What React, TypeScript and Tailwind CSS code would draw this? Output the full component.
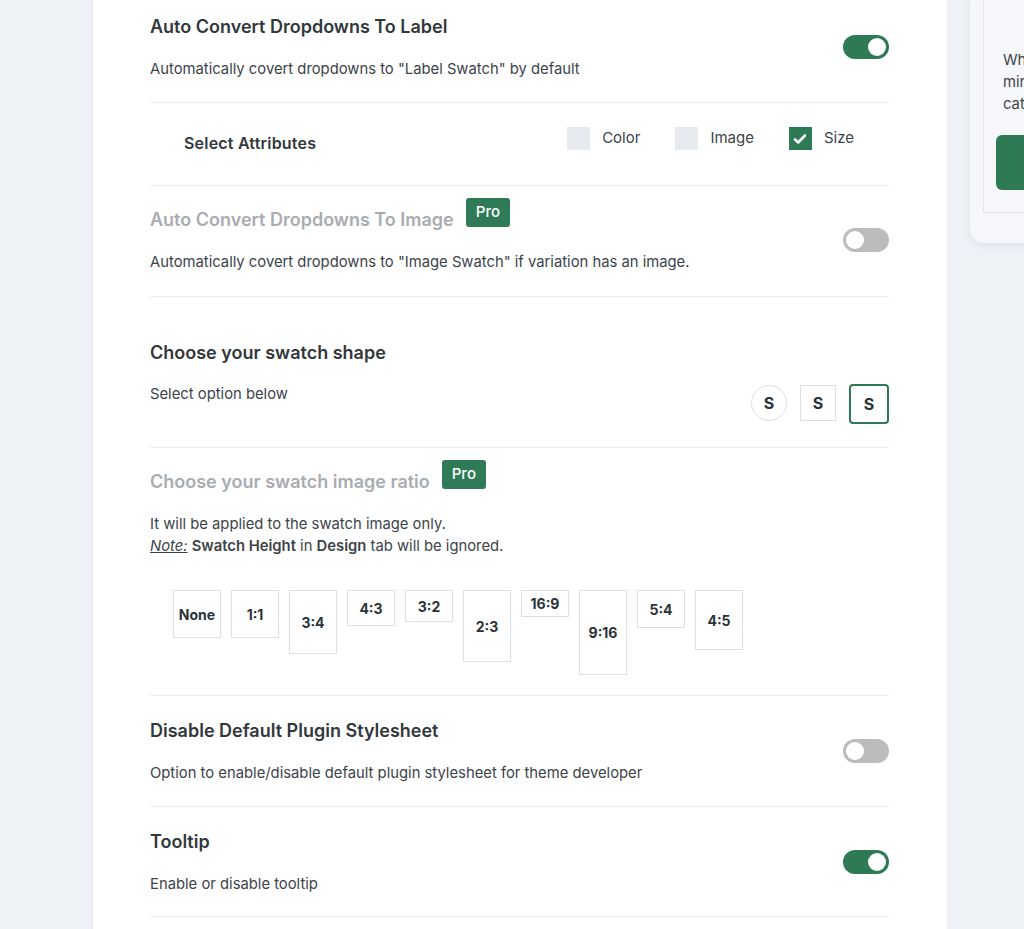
import type { ReactNode } from "react";

const green = "bg-[#2d7a55]";

function Toggle({ on }: { on: boolean }) {
  return (
    <span
      className={[
        "flex h-6 w-[46px] shrink-0 items-center rounded-full px-[3px]",
        on ? `${green} justify-end` : "bg-[#bcbcbc] justify-start"
      ].join(" ")}
    >
      <span className="h-[18px] w-[18px] rounded-full bg-white" />
    </span>
  );
}

function ProBadge() {
  return (
    <span className="ml-[12px] mb-[5px] flex h-[29px] items-center rounded-[3px] bg-[#2f7b57] px-[10px] text-[15px] font-medium text-white">
      Pro
    </span>
  );
}

function ToggleRow({
  title,
  desc,
  on,
  pro,
  className
}: {
  title: string;
  desc: string;
  on: boolean;
  pro?: boolean;
  className: string;
}) {
  return (
    <section className={`flex items-center justify-between border-b border-[#eceef1] ${className}`}>
      <div className="flex flex-col">
        <div className="flex items-end">
          <h2
            className={`h-6 text-[18px] font-semibold leading-6 ${pro ? "text-[#a9acb0]" : "text-[#32373c]"}`}
          >
            {title}
          </h2>
          {pro && <ProBadge />}
        </div>
        <p className="mt-[20px] text-[14.8px] leading-5 text-[#3c434a]">{desc}</p>
      </div>
      <div className={pro ? "mt-[10px]" : ""}>
        <Toggle on={on} />
      </div>
    </section>
  );
}

function Checkbox({ label, checked }: { label: string; checked?: boolean }) {
  return (
    <label className="flex items-center gap-3">
      <span
        className={`flex h-[23px] w-[23px] items-center justify-center ${checked ? green : "bg-[#e7eaef]"}`}
      >
        {checked && (
          <svg width="16" height="16" viewBox="0 0 16 16" fill="none">
            <path d="M3 8.5l3.2 3L13 4.5" stroke="white" strokeWidth="2.6" strokeLinecap="round" strokeLinejoin="round" />
          </svg>
        )}
      </span>
      <span className="text-[15px] text-[#3c434a]">{label}</span>
    </label>
  );
}

const ratios: { label: string; aspect: string }[] = [
  { label: "None", aspect: "aspect-square" },
  { label: "1:1", aspect: "aspect-square" },
  { label: "3:4", aspect: "aspect-[3/4]" },
  { label: "4:3", aspect: "aspect-[4/3]" },
  { label: "3:2", aspect: "aspect-[3/2]" },
  { label: "2:3", aspect: "aspect-[2/3]" },
  { label: "16:9", aspect: "aspect-[16/9]" },
  { label: "9:16", aspect: "aspect-[9/16]" },
  { label: "5:4", aspect: "aspect-[5/4]" },
  { label: "4:5", aspect: "aspect-[4/5]" }
];

function ShapeOption({ children, className }: { children: ReactNode; className: string }) {
  return (
    <span className={`flex items-center justify-center text-[16px] font-bold text-[#2c3338] ${className}`}>
      {children}
    </span>
  );
}

export default function App() {
  return (
    <div className="flex h-[929px] w-[1024px] overflow-hidden bg-[#eef1f6] font-['Inter','Liberation_Sans',sans-serif]">
      <main className="ml-[92px] h-full w-[855px] shrink-0 border-l border-[#e6e9ee] bg-white pl-[57px] pr-[58px]">
        <ToggleRow
          title="Auto Convert Dropdowns To Label"
          desc={'Automatically covert dropdowns to "Label Swatch" by default'}
          on
          className="pt-[15px] pb-[23px]"
        />

        <section className="flex h-[83px] items-start justify-between border-b border-[#eceef1] pt-[24px] pl-[34px] pr-[35px]">
          <span className="mt-[6px] text-[16px] font-semibold leading-5 tracking-[0.2px] text-[#32373c]">
            Select Attributes
          </span>
          <div className="flex items-center gap-[35px]">
            <Checkbox label="Color" />
            <Checkbox label="Image" />
            <Checkbox label="Size" checked />
          </div>
        </section>

        <ToggleRow
          title="Auto Convert Dropdowns To Image"
          desc={'Automatically covert dropdowns to "Image Swatch" if variation has an image.'}
          on={false}
          pro
          className="pt-[12px] pb-[24px]"
        />

        <section className="border-b border-[#eceef1] pt-[44px] pb-[23px]">
          <h2 className="h-6 text-[18px] font-semibold leading-6 text-[#32373c]">Choose your swatch shape</h2>
          <div className="mt-[19px] flex items-start justify-between">
            <p className="text-[14.8px] leading-5 text-[#3c434a]">Select option below</p>
            <div className="flex items-start gap-[13px]">
              <ShapeOption className="mt-px h-9 w-9 rounded-full border border-[#dcdfe4]">S</ShapeOption>
              <ShapeOption className="mt-px h-9 w-9 border border-[#dcdfe4]">S</ShapeOption>
              <ShapeOption className="h-10 w-10 rounded-[4px] border-2 border-[#2d7a55]">S</ShapeOption>
            </div>
          </div>
        </section>

        <section className="border-b border-[#eceef1] pt-[12px] pb-[20px]">
          <div className="flex items-end">
            <h2 className="h-6 text-[18px] font-semibold leading-6 text-[#a9acb0]">Choose your swatch image ratio</h2>
            <ProBadge />
          </div>
          <div className="mt-[19px] text-[14.8px] leading-[22px] text-[#3c434a]">
            <p>It will be applied to the swatch image only.</p>
            <p>
              <em className="underline">Note:</em> <strong className="font-semibold">Swatch Height</strong> in{" "}
              <strong className="font-semibold">Design</strong> tab will be ignored.
            </p>
          </div>
          <div className="mt-[33px] flex items-start gap-[10px] pl-[23px]">
            {ratios.map((r) => (
              <span
                key={r.label}
                className={`flex w-[48px] items-center justify-center border border-[#dcdfe4] text-[14px] font-bold text-[#2c3338] ${r.aspect}`}
              >
                {r.label}
              </span>
            ))}
          </div>
        </section>

        <ToggleRow
          title="Disable Default Plugin Stylesheet"
          desc="Option to enable/disable default plugin stylesheet for theme developer"
          on={false}
          className="pt-[23px] pb-[23px]"
        />

        <ToggleRow
          title="Tooltip"
          desc="Enable or disable tooltip"
          on
          className="pt-[23px] pb-[22px]"
        />
      </main>

      <aside className="ml-[23px] h-[243px] w-[280px] shrink-0 rounded-bl-[14px] bg-[#f5f7fa] pl-[13px] pb-[30px] shadow-[0_2px_8px_rgba(30,40,60,0.08)]">
        <div className="h-full border-b border-l border-[#e1e5eb] pl-[19px] pt-[49px]">
          <p className="text-[14.8px] leading-[22px] text-[#3c434a]">
            While free version
            <br />
            mirrors only
            <br />
            categories
          </p>
          <div className="-ml-[7px] mt-[20px] h-[55px] w-[220px] rounded-[6px] bg-[#2d7a55]" />
        </div>
      </aside>
    </div>
  );
}
